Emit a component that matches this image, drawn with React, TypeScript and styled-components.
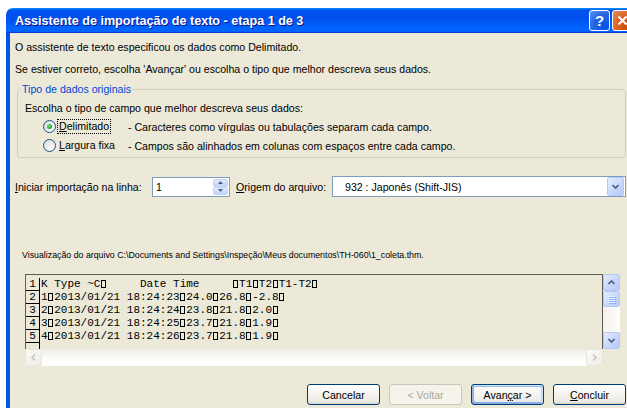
import React from 'react';
import styled, { createGlobalStyle } from 'styled-components';

const GlobalStyle = createGlobalStyle`
  html, body {
    margin: 0;
    padding: 0;
    background: #fff;
    overflow: hidden;
  }
  body {
    font-family: "Liberation Sans", Arial, sans-serif;
    font-size: 10.6px;
    color: #000;
  }
`;

const Window = styled.div`
  margin: 8px 0 0 6px;
  width: 628px;
  height: 400px;
  display: flex;
  flex-direction: column;
`;

const TitleBar = styled.div`
  flex: none;
  height: 25px;
  display: flex;
  align-items: center;
  gap: 2px;
  padding: 0 1px 0 9px;
  border-radius: 7px 7px 0 0;
  background: linear-gradient(180deg, #0997ff, #0053ee 8%, #0050ee 40%, #06f 88%, #06f 93%, #005bff 95%, #003dd7 96%, #003dd7);
`;

const Title = styled.div`
  flex: 1;
  color: #fff;
  font-weight: bold;
  font-size: 12.6px;
  text-shadow: 1px 1px #0f1089;
  white-space: nowrap;
`;

const CaptionButton = styled.div<{ $close?: boolean }>`
  width: 21px;
  height: 21px;
  box-sizing: border-box;
  border: 1px solid #fff;
  border-radius: 3px;
  display: flex;
  align-items: center;
  justify-content: center;
  color: #fff;
  font-weight: bold;
  font-size: 15px;
  background: ${(p) =>
    p.$close
      ? 'radial-gradient(circle at 85% 85%, #cc4600, #dc6527 55%, #e58d67)'
      : 'radial-gradient(circle at 85% 85%, #0054e9, #2663e0 55%, #5c97f5)'};
`;

const Body = styled.div`
  flex: 1;
  display: flex;
  flex-direction: column;
  background: #ece9d8;
  border-left: 4px solid #0055e5;
  border-right: 4px solid #0055e5;
  padding: 7px 4px 0 5px;
`;

const Line = styled.p<{ $gap?: number }>`
  margin: ${(p) => p.$gap ?? 0}px 0 0;
  line-height: 14px;
  white-space: nowrap;
`;

const FileLine = styled(Line)`
  margin-left: 7px;
  font-size: 8.8px;
`;

const Group = styled.fieldset`
  margin: 6px 0 0 2px;
  padding: 0 0 2px 7px;
  border: 1px solid #d0d0bf;
  border-radius: 3px;
  min-width: 0;
`;

const Legend = styled.legend`
  color: #0046d5;
  line-height: 14px;
  padding: 0 1px;
  margin-left: -4px;
`;

const Prompt = styled.div`
  margin-top: 5px;
  line-height: 14px;
`;

const Choices = styled.div`
  margin: 2px 0 0 18px;
  display: grid;
  grid-template-columns: 16px 69px 1fr;
  grid-auto-rows: 19px;
  align-items: center;
`;

const Radio = styled.span<{ $checked?: boolean }>`
  width: 13px;
  height: 13px;
  box-sizing: border-box;
  border: 1px solid #1c5180;
  border-radius: 50%;
  background: linear-gradient(135deg, #dcdcd7, #fff);
  display: flex;
  align-items: center;
  justify-content: center;
  &::after {
    content: '';
    display: ${(p) => (p.$checked ? 'block' : 'none')};
    width: 5px;
    height: 5px;
    border-radius: 50%;
    background: radial-gradient(circle at 35% 35%, #71e371, #21a121 70%);
  }
`;

const ChoiceLabel = styled.span<{ $focused?: boolean }>`
  justify-self: start;
  line-height: 13px;
  padding: 0 1px;
  margin-left: -1px;
  outline: ${(p) => (p.$focused ? '1px dotted #000' : 'none')};
`;

const FieldRow = styled.div`
  margin-top: 18px;
  display: flex;
  align-items: center;
  height: 21px;
`;

const FieldLabel = styled.span<{ $width: number; $gap?: number }>`
  flex: none;
  width: ${(p) => p.$width}px;
  margin-left: ${(p) => p.$gap ?? 0}px;
  white-space: nowrap;
`;

const SpinBox = styled.div`
  flex: none;
  width: 78px;
  height: 20px;
  box-sizing: border-box;
  border: 1px solid #7f9db9;
  background: #fff;
  display: flex;
  align-items: center;
  padding: 0 1px 0 3px;
`;

const SpinValue = styled.span`
  flex: 1;
`;

const SpinButtons = styled.div`
  display: flex;
  flex-direction: column;
`;

const SpinHalf = styled.div`
  width: 15px;
  height: 8px;
  box-sizing: border-box;
  border: 1px solid #c4d3f6;
  border-radius: 2px;
  background: linear-gradient(180deg, #e0e9fd, #c1d2fb);
  display: flex;
  align-items: center;
  justify-content: center;
`;

const Combo = styled.div`
  flex: 1;
  height: 21px;
  box-sizing: border-box;
  border: 1px solid #7f9db9;
  background: #fff;
  display: flex;
  align-items: center;
  padding: 0 1px 0 12px;
`;

const ComboText = styled.span`
  flex: 1;
`;

const ScrollButton = styled.div<{ $disabled?: boolean; $h?: number }>`
  flex: none;
  width: 17px;
  height: ${(p) => p.$h ?? 17}px;
  box-sizing: border-box;
  border: 1px solid ${(p) => (p.$disabled ? '#e8e6da' : '#b4c8f6')};
  border-radius: 2px;
  background: ${(p) =>
    p.$disabled
      ? 'linear-gradient(135deg, #fbfbf8, #eeede5)'
      : 'linear-gradient(135deg, #e6eefc, #c5d5fc 60%, #b8cbf7)'};
  display: flex;
  align-items: center;
  justify-content: center;
`;

const Preview = styled.div`
  margin: 12px 0 0 10px;
  display: grid;
  grid-template-columns: 578px 17px;
  grid-template-rows: 75px 17px;
`;

const DataPane = styled.div`
  border: 1px solid #5d5b52;
  border-bottom: none;
  overflow: hidden;
  padding-top: 3px;
  font-family: "Liberation Mono", "DejaVu Sans Mono", monospace;
  font-size: 11px;
`;

const DataRow = styled.div`
  display: flex;
  height: 13px;
  line-height: 12px;
  white-space: pre;
`;

const LineNo = styled.span`
  flex: none;
  width: 14px;
  height: 13px;
  box-sizing: border-box;
  border-right: 1px solid #000;
  border-bottom: 1px solid #000;
  text-align: center;
`;

const DataText = styled.span`
  margin-left: 1px;
`;

/* unprintable tab character, shown as an empty box one cell wide */
const Tab = styled.span`
  display: inline-block;
  width: 5px;
  height: 8px;
  margin: 0 0.8px;
  box-sizing: border-box;
  border: 1px solid #000;
  vertical-align: -1px;
`;

const VScroll = styled.div`
  display: flex;
  flex-direction: column;
  background: linear-gradient(90deg, #f3f1ec, #fefefb);
`;

const Track = styled.div`
  flex: 1;
`;

const HScroll = styled.div`
  display: flex;
  align-items: center;
  justify-content: space-between;
  background: linear-gradient(180deg, #eeede5, #fdfdfa 60%, #fff);
`;

const Grip = styled.div`
  display: flex;
  flex-direction: column;
  gap: 1px;
  & > span {
    width: 7px;
    height: 1px;
    background: #eef4fe;
    box-shadow: 1px 1px #8cb0f8;
  }
`;

const Actions = styled.div`
  margin-top: 18px;
  display: flex;
  justify-content: flex-end;
  gap: 9px;
`;

const Button = styled.button<{ $default?: boolean }>`
  width: 73px;
  height: 21px;
  padding: 0;
  font: inherit;
  color: #000;
  border: 1px solid #003c74;
  border-radius: 3px;
  background: linear-gradient(180deg, #fff, #ecebe6 86%, #d6d0c5);
  box-shadow: ${(p) =>
    p.$default
      ? 'inset -1px 1px #cee7ff, inset 1px 2px #98b8ea, inset -2px 2px #bcd4f6, inset 1px -1px #89ade4, inset 2px -2px #89ade4'
      : 'none'};
  &:disabled {
    color: #aca899;
    border-color: #c9c7ba;
    background: #f5f4ea;
  }
`;

type Dir = 'up' | 'down' | 'left' | 'right';

const Chevron: React.FC<{ dir: Dir; color?: string }> = ({ dir, color = '#4d6185' }) => {
  const rot = { up: 0, right: 90, down: 180, left: 270 }[dir];
  return (
    <svg width="9" height="9" viewBox="0 0 9 9">
      <polyline
        points="1.5,6 4.5,3 7.5,6"
        fill="none"
        stroke={color}
        strokeWidth="1.7"
        transform={`rotate(${rot} 4.5 4.5)`}
      />
    </svg>
  );
};

const Triangle: React.FC<{ down?: boolean }> = ({ down }) => (
  <svg width="5" height="3" viewBox="0 0 5 3">
    <polygon points={down ? '0,0 5,0 2.5,3' : '0,3 5,3 2.5,0'} fill="#4d6185" />
  </svg>
);

// tab-separated lines of the file; "\t" is drawn as a box
const rows = [
  'K Type ~C\t     Date Time     \tT1\tT2\tT1-T2\t',
  '1\t2013/01/21 18:24:23\t24.0\t26.8\t-2.8\t',
  '2\t2013/01/21 18:24:24\t23.8\t21.8\t2.0\t',
  '3\t2013/01/21 18:24:25\t23.7\t21.8\t1.9\t',
  '4\t2013/01/21 18:24:26\t23.7\t21.8\t1.9\t',
  '',
];

const renderRow = (text: string) =>
  text.split('\t').map((part, i) => (
    <React.Fragment key={i}>
      {i > 0 && <Tab />}
      {part}
    </React.Fragment>
  ));

const App: React.FC = () => {
  return (
    <>
      <GlobalStyle />
      <Window>
        <TitleBar>
          <Title>Assistente de importação de texto - etapa 1 de 3</Title>
          <CaptionButton>?</CaptionButton>
          <CaptionButton $close>
            <svg width="11" height="11" viewBox="0 0 11 11">
              <path d="M1.5 1.5 L9.5 9.5 M9.5 1.5 L1.5 9.5" stroke="#fff" strokeWidth="2" />
            </svg>
          </CaptionButton>
        </TitleBar>
        <Body>
          <Line>O assistente de texto especificou os dados como Delimitado.</Line>
          <Line $gap={8}>Se estiver correto, escolha 'Avançar' ou escolha o tipo que melhor descreva seus dados.</Line>
          <Group>
            <Legend>Tipo de dados originais</Legend>
            <Prompt>Escolha o tipo de campo que melhor descreva seus dados:</Prompt>
            <Choices>
              <Radio $checked />
              <ChoiceLabel $focused>
                <u>D</u>elimitado
              </ChoiceLabel>
              <span>- Caracteres como vírgulas ou tabulações separam cada campo.</span>
              <Radio />
              <ChoiceLabel>
                <u>L</u>argura fixa
              </ChoiceLabel>
              <span>- Campos são alinhados em colunas com espaços entre cada campo.</span>
            </Choices>
          </Group>
          <FieldRow>
            <FieldLabel $width={137}>
              <u>I</u>niciar importação na linha:
            </FieldLabel>
            <SpinBox>
              <SpinValue>1</SpinValue>
              <SpinButtons>
                <SpinHalf>
                  <Triangle />
                </SpinHalf>
                <SpinHalf>
                  <Triangle down />
                </SpinHalf>
              </SpinButtons>
            </SpinBox>
            <FieldLabel $width={96} $gap={6}>
              <u>O</u>rigem do arquivo:
            </FieldLabel>
            <Combo>
              <ComboText>932 : Japonês (Shift-JIS)</ComboText>
              <ScrollButton $h={19}>
                <Chevron dir="down" />
              </ScrollButton>
            </Combo>
          </FieldRow>
          <FileLine $gap={51}>
            Visualização do arquivo C:\Documents and Settings\Inspeção\Meus documentos\TH-060\1_coleta.thm.
          </FileLine>
          <Preview>
            <DataPane>
              {rows.map((text, i) => (
                <DataRow key={i}>
                  <LineNo>{i < 5 ? i + 1 : ''}</LineNo>
                  <DataText>{renderRow(text)}</DataText>
                </DataRow>
              ))}
            </DataPane>
            <VScroll>
              <ScrollButton>
                <Chevron dir="up" />
              </ScrollButton>
              <ScrollButton $h={16}>
                <Grip>
                  <span />
                  <span />
                  <span />
                  <span />
                </Grip>
              </ScrollButton>
              <Track />
              <ScrollButton>
                <Chevron dir="down" />
              </ScrollButton>
            </VScroll>
            <HScroll>
              <ScrollButton $disabled>
                <Chevron dir="left" color="#c9c7ba" />
              </ScrollButton>
              <ScrollButton $disabled>
                <Chevron dir="right" color="#c9c7ba" />
              </ScrollButton>
            </HScroll>
          </Preview>
          <Actions>
            <Button>Cancelar</Button>
            <Button disabled>&lt; Voltar</Button>
            <Button $default>
              Avan<u>ç</u>ar &gt;
            </Button>
            <Button>
              <u>C</u>oncluir
            </Button>
          </Actions>
        </Body>
      </Window>
    </>
  );
};

export default App;
